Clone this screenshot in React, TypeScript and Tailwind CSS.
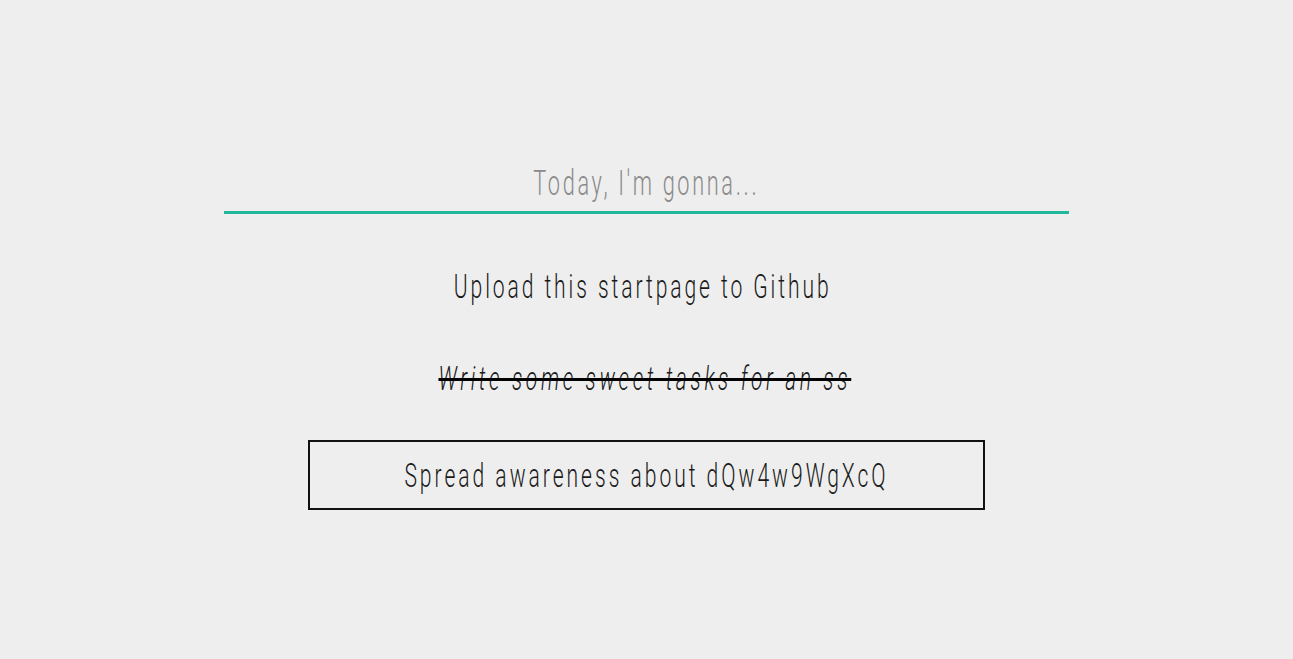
import React from "react";

const font = { fontFamily: "Roboto, 'Noto Sans', sans-serif" };

export default function App() {
  return (
    <div className="min-h-screen w-full bg-[#eeeeee]" style={font}>
      <div className="mx-auto w-[845px] pt-[160px]">
        <div className="flex h-[54px] items-start justify-center border-b-[3px] border-[#22b89c]">
          <span className="inline-block origin-center scale-x-[0.62] whitespace-nowrap text-[35px] font-light leading-[48px] tracking-[4.3px] text-[#8a8a8a]">
            Today, I'm gonna...
          </span>
        </div>
        <div className="mx-auto mt-[47px] flex w-[677px] flex-col items-center">
          <div className="flex h-[50px] items-center justify-center pr-[8px]">
            <span className="inline-block origin-center scale-x-[0.62] whitespace-nowrap text-[34px] font-light leading-[48px] tracking-[4.7px] text-[#1a1a1a]">
              Upload this startpage to Github
            </span>
          </div>
          <div className="mt-[42px] flex h-[50px] items-center justify-center pr-[4px]">
            <span className="inline-block origin-center scale-x-[0.62] whitespace-nowrap text-[34px] font-light italic leading-[48px] tracking-[5.8px] text-[#1a1a1a] line-through decoration-[3px] decoration-black">
              Write some sweet tasks for an ss
            </span>
          </div>
          <div className="mt-[37px] flex h-[70px] w-[677px] items-center justify-center border-2 border-[#111]">
            <span className="inline-block origin-center scale-x-[0.62] whitespace-nowrap text-[34px] font-light leading-[48px] tracking-[4.8px] text-[#1a1a1a]">
              Spread awareness about dQw4w9WgXcQ
            </span>
          </div>
        </div>
      </div>
    </div>
  );
}
